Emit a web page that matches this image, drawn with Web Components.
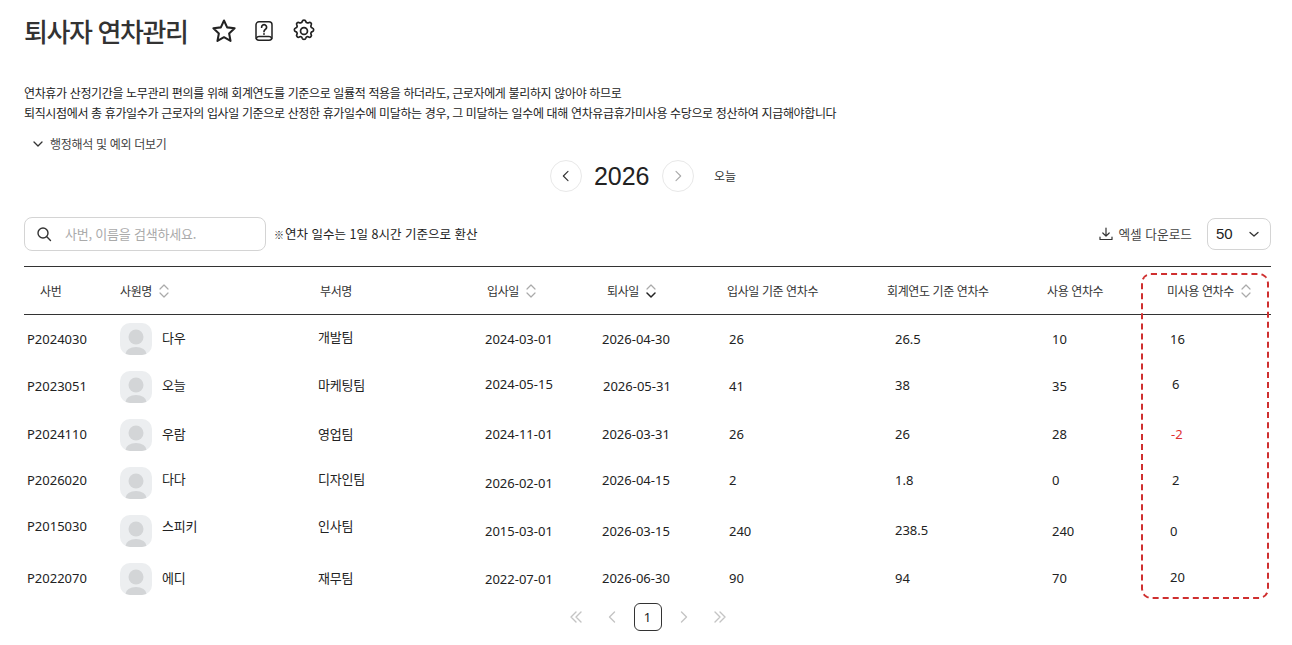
<!DOCTYPE html>
<html lang="ko">
<head>
<meta charset="utf-8">
<title>퇴사자 연차관리</title>
<style>
  html, body { margin: 0; background: #fff; }
  body { font-family: "Noto Sans", "Noto Sans CJK KR", sans-serif; color: #222; }
</style>
</head>
<body>
<leave-page></leave-page>
<script>
const CHEV_L = '<path d="M15 5l-7 7 7 7"/>';
const CHEV_R = '<path d="M9 5l7 7-7 7"/>';

window.customElements.define('title-bar', class extends HTMLElement {
  constructor() {
    super();
    const root = this.attachShadow({ mode: 'open' });
    root.innerHTML = `
    <style>
      :host { display: flex; align-items: center; height: 62px; }
      h1 {
        margin: 0 22px 0 0;
        font: 500 26px/1 "Noto Sans CJK KR", sans-serif;
        letter-spacing: -1.4px;
        color: #333;
      }
      svg { display: block; fill: none; stroke: #222; stroke-linecap: round; stroke-linejoin: round; }
      .icons { display: flex; align-items: center; gap: 15.5px; }
    </style>
    <h1>퇴사자 연차관리</h1>
    <div class="icons">
      <svg width="28" height="28" viewBox="0 0 24 24" stroke-width="1.75"><path d="M12 3l2.7 5.9 6.4.8-4.7 4.4 1.2 6.4-5.6-3.2-5.6 3.2 1.2-6.4-4.7-4.4 6.4-.8z"/></svg>
      <svg width="22" height="22" viewBox="0 0 22 22" stroke-width="1.5"><path d="M6 1.800h10a3 3 0 0 1 3 3v12.400a3 3 0 0 1-3 3H6a3 3 0 0 1-3-3V4.800a3 3 0 0 1 3-3z"/><path d="M3.300 18.400C4 17 5 16.600 6 16.600h10c1 0 2 .4 2.700 1.800"/><path d="M8.600 7.200a2.500 2.500 0 1 1 3.900 2.100c-.9.6-1.500 1.100-1.500 2.300" stroke-width="1.700"/><path d="M11 14v.1" stroke-width="1.800"/></svg>
      <svg width="26" height="26" viewBox="0 0 24 24" stroke-width="1.6"><path d="M10.300 3.200c.4-1.600 3-1.600 3.400 0a1.700 1.700 0 0 0 2.600 1.100c1.500-.9 3.200.8 2.300 2.300a1.700 1.700 0 0 0 1.100 2.600c1.600.4 1.600 3 0 3.400a1.700 1.700 0 0 0-1.100 2.600c.9 1.500-.8 3.200-2.300 2.300a1.700 1.700 0 0 0-2.600 1.100c-.4 1.600-3 1.600-3.400 0a1.700 1.700 0 0 0-2.600-1.100c-1.500.9-3.200-.8-2.300-2.300a1.700 1.700 0 0 0-1.100-2.600c-1.600-.4-1.600-3 0-3.400a1.700 1.700 0 0 0 1.100-2.600c-.9-1.500.8-3.200 2.300-2.300a1.700 1.700 0 0 0 2.600-1.100z"/><circle cx="12" cy="12" r="3.200"/></svg>
    </div>
    `;
  }
});

window.customElements.define('notice-text', class extends HTMLElement {
  constructor() {
    super();
    const root = this.attachShadow({ mode: 'open' });
    root.innerHTML = `
    <style>
      :host { display: block; padding-top: 21px; font: 400 12px/20px "Noto Sans CJK KR", sans-serif; color: #222; }
      p { margin: 0; letter-spacing: -0.36px; }
      .more { display: flex; align-items: center; gap: 7px; margin: 11px 0 0 9px; color: #444; height: 20px; letter-spacing: -0.3px; }
      svg { display: block; fill: none; stroke: #333; stroke-width: 1.3; stroke-linecap: round; stroke-linejoin: round; }
    </style>
    <p>연차휴가 산정기간을 노무관리 편의를 위해 회계연도를 기준으로 일률적 적용을 하더라도, 근로자에게 불리하지 않아야 하므로</p>
    <p>퇴직시점에서 총 휴가일수가 근로자의 입사일 기준으로 산정한 휴가일수에 미달하는 경우, 그 미달하는 일수에 대해 연차유급휴가미사용 수당으로 정산하여 지급해야합니다</p>
    <div class="more">
      <svg width="10" height="10" viewBox="0 0 10 10"><path d="M1 3l4 4 4-4"/></svg>
      <span>행정해석 및 예외 더보기</span>
    </div>
    `;
  }
});

window.customElements.define('year-nav', class extends HTMLElement {
  constructor() {
    super();
    const root = this.attachShadow({ mode: 'open' });
    root.innerHTML = `
    <style>
      :host { display: flex; align-items: center; justify-content: center; height: 32px; margin-top: 6px; padding-right: 9px; }
      .round {
        box-sizing: border-box; width: 32px; height: 32px; border: 1px solid #e8e8e8; border-radius: 50%;
        display: flex; align-items: center; justify-content: center;
      }
      svg { display: block; fill: none; stroke-width: 1.7; stroke-linecap: round; stroke-linejoin: round; }
      .year { font: 400 25px/32px "Liberation Sans", sans-serif; color: #222; margin: 0 12.5px 0 12px; }
      .today { font: 400 12px/20px "Noto Sans CJK KR", sans-serif; color: #333; margin-left: 20px; }
    </style>
    <div class="round"><svg width="16" height="16" viewBox="0 0 24 24" stroke="#333">${CHEV_L}</svg></div>
    <span class="year">2026</span>
    <div class="round"><svg width="16" height="16" viewBox="0 0 24 24" stroke="#aaa">${CHEV_R}</svg></div>
    <span class="today">오늘</span>
    `;
  }
});

window.customElements.define('table-toolbar', class extends HTMLElement {
  constructor() {
    super();
    const root = this.attachShadow({ mode: 'open' });
    root.innerHTML = `
    <style>
      :host { display: flex; align-items: center; height: 34px; margin-top: 25px; font: 400 13px/20px "Noto Sans CJK KR", sans-serif; color: #222; }
      .search {
        box-sizing: border-box; width: 242px; height: 34px; border: 1px solid #d4d4d4; border-radius: 8px;
        display: flex; align-items: center; padding-left: 11px; gap: 13px; color: #aaa; letter-spacing: -0.22px;
      }
      .note { margin-left: 8px; font-size: 12.5px; }
      .note b { font-size: 10px; font-weight: 900; margin-right: 1px; }
      .spacer { flex: 1; }
      .excel { display: flex; align-items: center; gap: 5px; font-size: 12.7px; color: #444; }
      .select {
        box-sizing: border-box; width: 64px; height: 32px; margin-left: 15px; border: 1px solid #d4d4d4; border-radius: 8px;
        display: flex; align-items: center; justify-content: space-between; padding: 0 10px 0 8px;
        font: 400 15px/20px "Liberation Sans", sans-serif; color: #222;
      }
      svg { display: block; fill: none; stroke: #333; stroke-linecap: round; stroke-linejoin: round; }
    </style>
    <div class="search">
      <svg width="16" height="16" viewBox="0 0 16 16" stroke-width="1.4"><circle cx="7" cy="7" r="5"/><path d="M10.800 10.800L14.500 14.500"/></svg>
      <span>사번, 이름을 검색하세요.</span>
    </div>
    <span class="note"><b>※</b>연차 일수는 1일 8시간 기준으로 환산</span>
    <span class="spacer"></span>
    <span class="excel">
      <svg width="14" height="14" viewBox="0 0 14 14" stroke-width="1.2"><path d="M7 1v8M3.800 6L7 9.200 10.200 6M1 10v2.500h12V10"/></svg>
      <span>엑셀 다운로드</span>
    </span>
    <div class="select">
      <span>50</span>
      <svg width="12" height="12" viewBox="0 0 12 12" stroke-width="1.3"><path d="M2 4.500l4 3.500 4-3.500"/></svg>
    </div>
    `;
  }
});

window.customElements.define('sort-mark', class extends HTMLElement {
  constructor() {
    super();
    const down = this.hasAttribute('down');
    const root = this.attachShadow({ mode: 'open' });
    root.innerHTML = `
    <style>
      :host { display: inline-block; width: 10px; height: 14px; margin-left: 6px; }
      svg { display: block; fill: none; stroke-width: 1.2; stroke-linecap: round; stroke-linejoin: round; }
    </style>
    <svg width="10" height="14" viewBox="0 0 10 14">
      <path d="M1 5l4-4 4 4" stroke="#aaa"/>
      <path d="M1 9l4 4 4-4" stroke="${down ? '#222' : '#aaa'}" stroke-width="${down ? 1.5 : 1.2}"/>
    </svg>
    `;
  }
});

// column widths are shared by the header and every row
const GRID = '80px 200px 167px 120px 120px 160px 160px 120px 120px';

window.customElements.define('emp-row', class extends HTMLElement {
  set data(r) {
    const root = this.attachShadow({ mode: 'open' });
    // r.cells: [text, left inside the column, vertical nudge]
    const cell = (c) => `<span class="cell ${c[3] || ''}" style="margin-left:${c[1]}px;margin-top:${14 + c[2]}px">${c[0]}</span>`;
    root.innerHTML = `
    <style>
      :host { display: grid; grid-template-columns: ${GRID}; height: 48px; font: 400 13px/20px "Noto Sans", "Noto Sans CJK KR", sans-serif; color: #222; }
      .cell { align-self: start; white-space: nowrap; }
      .kr { font: 400 13px/20px "Noto Sans CJK KR", sans-serif; letter-spacing: -0.2px; }
      .neg { color: #e03131; }
      .who { display: flex; align-items: flex-start; margin-left: 16px; }
      .who svg { display: block; margin-top: 8px; }
      .who span { margin-left: 10px; font: 400 13px/20px "Noto Sans CJK KR", sans-serif; letter-spacing: -0.2px; }
    </style>
    ${cell(r.cells[0])}
    <div class="who">
      <svg width="32" height="32" viewBox="0 0 32 32">
        <defs><clipPath id="a"><rect width="32" height="32" rx="10"/></clipPath></defs>
        <g clip-path="url(#a)">
          <rect width="32" height="32" fill="#eceef0"/>
          <circle cx="16" cy="14" r="7.500" fill="#d3d5d7"/>
          <ellipse cx="16" cy="31" rx="10.500" ry="7" fill="#d3d5d7"/>
        </g>
      </svg>
      <span style="margin-top:${14 + r.nameDy}px">${r.name}</span>
    </div>
    ${r.cells.slice(1).map(cell).join('')}
    `;
  }
});

window.customElements.define('emp-table', class extends HTMLElement {
  constructor() {
    super();
    const root = this.attachShadow({ mode: 'open' });
    root.innerHTML = `
    <style>
      :host { display: block; position: relative; margin-top: 15px; }
      .head {
        display: grid; grid-template-columns: ${GRID}; align-items: center; height: 47px;
        border-top: 1px solid #333; border-bottom: 1px solid #333;
        font: 400 12px/20px "Noto Sans CJK KR", sans-serif; color: #333;
      }
      .head div { display: flex; align-items: center; padding-left: 16px; white-space: nowrap; letter-spacing: -0.4px; }
      sort-mark { margin-left: 7px; }
      .box {
        position: absolute; left: 1117px; top: 7px; width: 128px; height: 326px; box-sizing: border-box;
        border: 2px dashed #cf2f2f; border-radius: 10px;
      }
    </style>
    <div class="head">
      <div>사번</div>
      <div>사원명<sort-mark></sort-mark></div>
      <div>부서명</div>
      <div>입사일<sort-mark></sort-mark></div>
      <div>퇴사일<sort-mark down></sort-mark></div>
      <div>입사일 기준 연차수</div>
      <div>회계연도 기준 연차수</div>
      <div>사용 연차수</div>
      <div>미사용 연차수<sort-mark></sort-mark></div>
    </div>
    <div class="rows"></div>
    <div class="box"></div>
    `;
    const rows = [
      { name: '다우', nameDy: -1, cells: [['P2024030', 3, -0.5], ['개발팀', 14, -2, 'kr'], ['2024-03-01', 14, -0.5], ['2026-04-30', 11, -0.5], ['26', 18, -0.5], ['26.5', 24, -0.5], ['10', 21, -0.5], ['16', 19, -0.5]] },
      { name: '오늘', nameDy: -2, cells: [['P2023051', 3, -1], ['마케팅팀', 14, -2, 'kr'], ['2024-05-15', 14, -3.5], ['2026-05-31', 12, -1.5], ['41', 18, -1.5], ['38', 24, -2.5], ['35', 21, -1], ['6', 21, -3]] },
      { name: '우람', nameDy: -1, cells: [['P2024110', 3, -1], ['영업팀', 14, -1, 'kr'], ['2024-11-01', 14, -1], ['2026-03-31', 11, -1], ['26', 18, -1], ['26', 24, -1], ['28', 21, -1], ['-2', 20, -1, 'neg']] },
      { name: '다다', nameDy: -4, cells: [['P2026020', 3, -3], ['디자인팀', 14, -4, 'kr'], ['2026-02-01', 14, 0], ['2026-04-15', 11, -3], ['2', 18, -3], ['1.8', 24, -3], ['0', 21, -3], ['2', 21, -3]] },
      { name: '스피키', nameDy: -5, cells: [['P2015030', 3, -5], ['인사팀', 14, -5, 'kr'], ['2015-03-01', 14, 0], ['2026-03-15', 11, 0], ['240', 18, 0], ['238.5', 24, -1], ['240', 21, 0], ['0', 19, 0]] },
      { name: '에디', nameDy: -1, cells: [['P2022070', 3, -1], ['재무팀', 14, -1, 'kr'], ['2022-07-01', 14, 0], ['2026-06-30', 11, -1], ['90', 18, -1], ['94', 24, -1], ['70', 21, -1], ['20', 19, -2]] }
    ];
    const holder = root.querySelector('.rows');
    rows.forEach((r) => {
      const row = document.createElement('emp-row');
      row.data = r;
      holder.appendChild(row);
    });
  }
});

window.customElements.define('page-nav', class extends HTMLElement {
  constructor() {
    super();
    const root = this.attachShadow({ mode: 'open' });
    root.innerHTML = `
    <style>
      :host { display: flex; align-items: center; justify-content: center; gap: 8px; height: 28px; }
      .b { width: 28px; height: 28px; display: flex; align-items: center; justify-content: center; box-sizing: border-box; }
      .cur { border: 1px solid #333; border-radius: 6px; font: 400 13px/20px "Noto Sans", sans-serif; color: #222; }
      svg { display: block; fill: none; stroke: #c4c4c4; stroke-width: 1.4; stroke-linecap: round; stroke-linejoin: round; }
    </style>
    <div class="b"><svg width="14" height="14" viewBox="0 0 14 14"><path d="M7 2L2 7l5 5M12 2L7 7l5 5"/></svg></div>
    <div class="b"><svg width="14" height="14" viewBox="0 0 14 14"><path d="M9.500 2L4.500 7l5 5"/></svg></div>
    <div class="b cur">1</div>
    <div class="b"><svg width="14" height="14" viewBox="0 0 14 14"><path d="M4.500 2l5 5-5 5"/></svg></div>
    <div class="b"><svg width="14" height="14" viewBox="0 0 14 14"><path d="M2 2l5 5-5 5M7 2l5 5-5 5"/></svg></div>
    `;
  }
});

window.customElements.define('leave-page', class extends HTMLElement {
  constructor() {
    super();
    const root = this.attachShadow({ mode: 'open' });
    root.innerHTML = `
    <style>
      :host { display: block; padding: 0 21px 0 24px; }
    </style>
    <title-bar></title-bar>
    <notice-text></notice-text>
    <year-nav></year-nav>
    <table-toolbar></table-toolbar>
    <emp-table></emp-table>
    <page-nav></page-nav>
    `;
  }
});
</script>
</body>
</html>
